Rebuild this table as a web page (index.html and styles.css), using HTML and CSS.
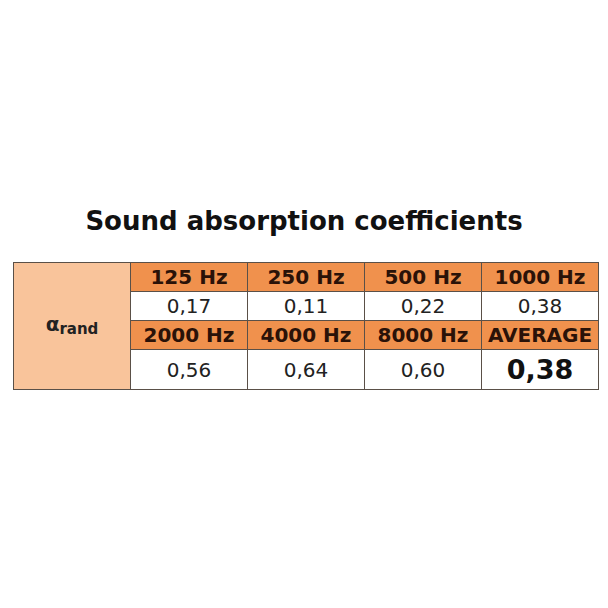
FILE: index.html
```html
<!DOCTYPE html>
<html>
<head>
  <title>Sound absorption coefficients</title>
  <link rel="stylesheet" href="styles.css">
</head>
<body>
  <div class="page">
    <h1 class="title">Sound absorption coefficients</h1>

    <table class="coeffs">
      <tr class="head">
        <td class="label" rowspan="4">&alpha;<sub>rand</sub></td>
        <td>125 Hz</td>
        <td>250 Hz</td>
        <td>500 Hz</td>
        <td>1000 Hz</td>
      </tr>
      <tr class="vals">
        <td>0,17</td>
        <td>0,11</td>
        <td>0,22</td>
        <td>0,38</td>
      </tr>
      <tr class="head">
        <td>2000 Hz</td>
        <td>4000 Hz</td>
        <td>8000 Hz</td>
        <td>AVERAGE</td>
      </tr>
      <tr class="vals tall">
        <td>0,56</td>
        <td>0,64</td>
        <td>0,60</td>
        <td class="avg">0,38</td>
      </tr>
    </table>
  </div>
</body>
</html>
```

FILE: styles.css
```css
body {
  margin: 0;
  background: #fff;
  font-family: "DejaVu Sans", Verdana, sans-serif;
  color: #1a1a1a;
}

.page {
  width: 608px;
  height: 608px;
  padding-top: 205px;
  box-sizing: border-box;
}

.title {
  margin: 0 0 24px;
  text-align: center;
  font-size: 26px;
  font-weight: bold;
  color: #111;
  line-height: 33px;
}

.coeffs {
  margin-left: 13px;
  border-collapse: collapse;
  width: 582px;
  table-layout: fixed;
}

.coeffs td {
  border: 1px solid #5a5048;
  text-align: center;
  padding: 0;
  width: 116px;
}

.coeffs .label {
  background: #f9c49b;
  font-weight: bold;
  font-size: 20px;
  color: #222;
}

.label sub {
  font-size: 15px;
  vertical-align: -3px;
}

.head td {
  background: #f0914d;
  font-weight: bold;
  font-size: 20px;
  height: 28px;
  line-height: 28px;
  color: #2a1208;
}

.vals td {
  background: #fff;
  font-size: 20px;
  height: 28px;
  line-height: 28px;
  color: #222;
}

.vals.tall td {
  height: 39px;
}

.coeffs .avg {
  font-size: 27px;
  font-weight: bold;
  color: #111;
}
```
